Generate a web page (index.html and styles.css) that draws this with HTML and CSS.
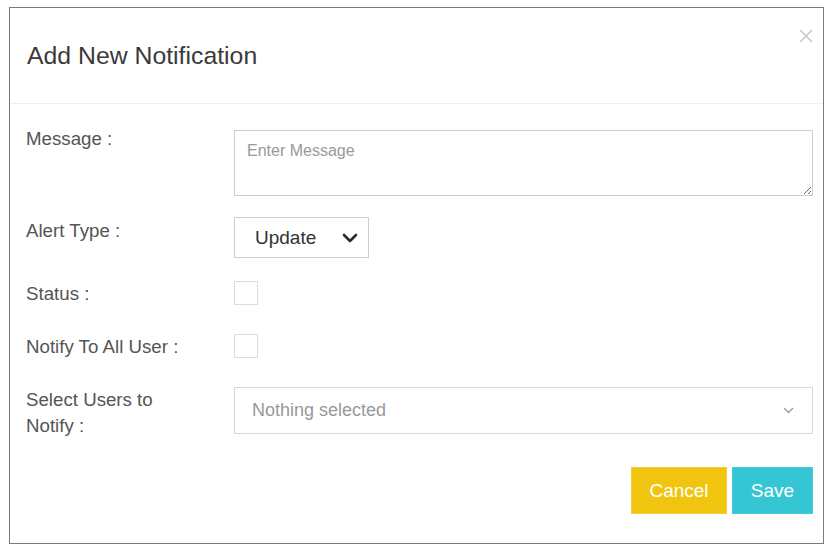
FILE: index.html
```html
<!DOCTYPE html>
<html lang="en">
<head>
<meta charset="utf-8">
<title>Add New Notification</title>
<link rel="stylesheet" href="styles.css">
</head>
<body>
<div class="modal">
  <div class="modal-header">
    <h4 class="modal-title">Add New Notification</h4>
    <button class="close" type="button" aria-label="Close">
      <svg width="14" height="14" viewBox="0 0 14 14"><path d="M1 1 L13 13 M13 1 L1 13" stroke="#c8c8c8" stroke-width="1.6" fill="none"/></svg>
    </button>
  </div>
  <div class="modal-body">
    <div class="field field-message">
      <label class="field-label">Message :</label>
      <textarea class="textarea" placeholder="Enter Message"></textarea>
    </div>
    <div class="field field-alert">
      <label class="field-label label-offset">Alert Type :</label>
      <div class="select-small">
        <span class="select-value">Update</span>
        <svg width="16" height="10" viewBox="0 0 16 10"><path d="M2 2 L8 8 L14 2" stroke="#2b2b2b" stroke-width="2.6" fill="none" stroke-linecap="round" stroke-linejoin="round"/></svg>
      </div>
    </div>
    <div class="field field-check">
      <label class="field-label">Status :</label>
      <span class="checkbox"></span>
    </div>
    <div class="field field-check">
      <label class="field-label">Notify To All User :</label>
      <span class="checkbox"></span>
    </div>
    <div class="field field-users">
      <label class="field-label">Select Users to<br>Notify :</label>
      <div class="select-wide">
        <span class="select-placeholder">Nothing selected</span>
        <svg width="11" height="7" viewBox="0 0 11 7"><path d="M1 1 L5.5 5.5 L10 1" stroke="#9a9a9a" stroke-width="1.3" fill="none"/></svg>
      </div>
    </div>
  </div>
  <div class="modal-footer">
    <button class="btn btn-cancel" type="button">Cancel</button>
    <button class="btn btn-save" type="button">Save</button>
  </div>
</div>
</body>
</html>
```

FILE: styles.css
```css
* { box-sizing: border-box; }

html, body {
  margin: 0;
  padding: 0;
  background: #ffffff;
  font-family: "Liberation Sans", Arial, sans-serif;
}

.modal {
  margin: 7px 0 0 9px;
  width: 815px;
  height: 537px;
  border: 1px solid #7b7b7b;
  background: #fff;
  display: flex;
  flex-direction: column;
}

.modal-header {
  height: 96px;
  border-bottom: 1px solid #efefef;
  padding: 0 10px 0 17px;
  display: flex;
  align-items: center;
  justify-content: space-between;
}

.modal-title {
  margin: 0;
  font-size: 24.8px;
  line-height: 1.1;
  font-weight: normal;
  color: #3a3a3a;
}

.close {
  align-self: flex-start;
  margin-top: 21px;
  border: 0;
  padding: 0;
  background: transparent;
  width: 14px;
  height: 14px;
  display: flex;
}

.modal-body {
  padding: 22px 10px 0 16px;
  display: flex;
  flex-direction: column;
}

.field {
  display: flex;
  align-items: flex-start;
}

.field-label {
  width: 208px;
  flex: none;
  font-size: 18.7px;
  line-height: 26px;
  color: #555;
}

.label-offset { padding-top: 1px; }

.field-message { margin-bottom: 21px; }
.field-alert { margin-bottom: 23px; }
.field-check { margin-bottom: 27px; }

.textarea {
  flex: 1;
  margin-top: 4px;
  height: 66px;
  border: 1px solid #c7cfdc;
  padding: 10px 12px;
  font-family: "Liberation Sans", Arial, sans-serif;
  font-size: 16px;
  line-height: 1.2;
  color: #555;
  resize: vertical;
  outline: none;
}

.textarea::placeholder { color: #999; }

.select-small {
  width: 135px;
  height: 41px;
  border: 1px solid #c7cfdc;
  display: flex;
  align-items: center;
  justify-content: space-between;
  padding: 0 10px 0 20px;
}

.select-value {
  font-size: 19px;
  color: #333;
}

.checkbox {
  width: 24px;
  height: 24px;
  border: 1px solid #dcdcdc;
  background: #fff;
}

.select-wide {
  flex: 1;
  height: 47px;
  border: 1px solid #d3d9e3;
  display: flex;
  align-items: center;
  justify-content: space-between;
  padding: 0 18px 0 17px;
}

.select-placeholder {
  font-size: 18px;
  color: #999;
}

.modal-footer {
  padding: 28px 10px 0 16px;
  display: flex;
  justify-content: flex-end;
  gap: 5px;
}

.btn {
  height: 47px;
  border: 1px solid transparent;
  font-family: "Liberation Sans", Arial, sans-serif;
  font-size: 19px;
  color: #fff;
  padding: 0;
  cursor: pointer;
}

.btn-cancel {
  width: 96px;
  background: #f1c40f;
  border-color: #f4cd3c;
}

.btn-save {
  width: 81px;
  background: #36c6d3;
  border-color: #45cbd7;
}
```
